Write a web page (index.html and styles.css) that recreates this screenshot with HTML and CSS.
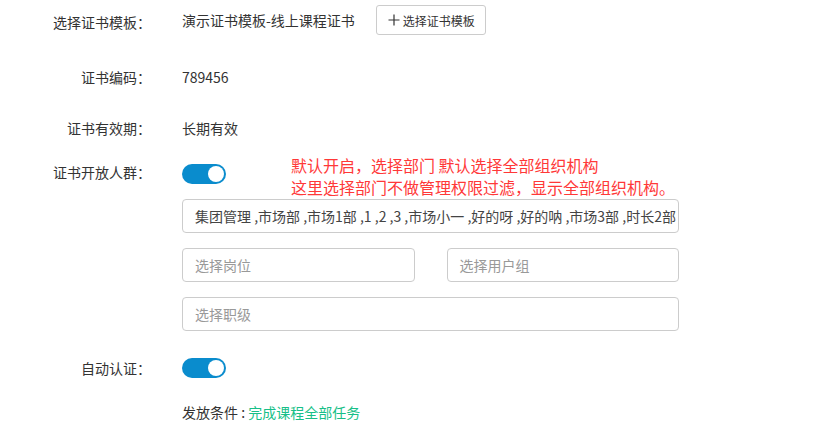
FILE: index.html
```html
<!DOCTYPE html>
<html lang="zh-CN">
<head>
    <meta charset="UTF-8">
    <meta name="viewport" content="width=device-width, initial-scale=1.0">
    <title>证书设置</title>
    <link rel="stylesheet" href="styles.css">
</head>
<body>
    <div class="form">
        <!-- 证书模板 -->
        <div class="row row-template">
            <div class="label">选择证书模板：</div>
            <div class="field inline">
                <span class="value">演示证书模板-线上课程证书</span>
                <button class="btn" type="button">
                    <svg class="plus" width="12" height="12" viewBox="0 0 12 12"><path d="M6 0.5V11.5M0.5 6H11.5" stroke="#333" stroke-width="1.2" fill="none"/></svg>选择证书模板
                </button>
            </div>
        </div>

        <div class="row row-code">
            <div class="label">证书编码：</div>
            <div class="field"><span class="value">789456</span></div>
        </div>

        <div class="row row-period">
            <div class="label">证书有效期：</div>
            <div class="field"><span class="value">长期有效</span></div>
        </div>

        <!-- 开放人群 -->
        <div class="row row-open">
            <div class="label">证书开放人群：</div>
            <div class="field">
                <div class="inline top">
                    <span class="switch on"><span class="knob"></span></span>
                    <p class="note">默认开启，选择部门 默认选择全部组织机构<br>这里选择部门不做管理权限过滤，显示全部组织机构。</p>
                </div>
                <div class="select">集团管理 ,市场部 ,市场1部 ,1 ,2 ,3 ,市场小一 ,好的呀 ,好的呐 ,市场3部 ,时长2部</div>
                <div class="pair">
                    <div class="select placeholder">选择岗位</div>
                    <div class="select placeholder">选择用户组</div>
                </div>
                <div class="select placeholder">选择职级</div>
            </div>
        </div>

        <div class="row row-auto">
            <div class="label">自动认证：</div>
            <div class="field"><span class="switch on"><span class="knob"></span></span></div>
        </div>

        <div class="row row-cond">
            <div class="label"></div>
            <div class="field"><span class="value">发放条件 : <span class="link">完成课程全部任务</span></span></div>
        </div>
    </div>
</body>
</html>
```

FILE: styles.css
```css
body {
    margin: 0;
    font-family: "Noto Sans CJK SC", "Liberation Sans", sans-serif;
    font-size: 14px;
    color: #333;
    background: #fff;
}
.form {
    width: 813px;
}
.row {
    display: flex;
    align-items: flex-start;
}
.label {
    width: 151px;
    flex: none;
    text-align: right;
    color: #333;
    line-height: 20px;
}
.field {
    margin-left: 31px;
    width: 497px;
}
.inline {
    display: flex;
    align-items: center;
}
.inline.top {
    align-items: flex-start;
}
.value {
    line-height: 20px;
}
.row-template {
    padding-top: 12px;
}
.row-template .field {
    margin-top: -7px;
}
.btn {
    display: flex;
    align-items: center;
    height: 30px;
    margin-left: 21px;
    padding: 0 10px 0 11px;
    background: #fff;
    border: 1px solid #ccc;
    border-radius: 3px;
    font-family: inherit;
    font-size: 12px;
    color: #333;
}
.plus {
    margin-right: 3px;
}
.row-code {
    margin-top: 32px;
}
.row-period {
    margin-top: 31px;
}
.row-open {
    margin-top: 24px;
}
.switch {
    position: relative;
    display: inline-block;
    width: 44px;
    height: 20px;
    border-radius: 10px;
    background: #0a8ccd;
    flex: none;
}
.knob {
    position: absolute;
    top: 2px;
    right: 2px;
    width: 16px;
    height: 16px;
    border-radius: 50%;
    background: #fff;
}
.row-open .switch {
    margin-top: 2px;
}
.note {
    margin: -8px 0 0 65px;
    color: #ff3838;
    font-size: 16px;
    line-height: 22px;
}
.select {
    box-sizing: border-box;
    height: 34px;
    margin-top: 15px;
    padding: 0 12px;
    border: 1px solid #ccc;
    border-radius: 4px;
    line-height: 32px;
    white-space: nowrap;
    overflow: hidden;
    color: #444;
}
.row-open .inline + .select {
    margin-top: 1px;
}
.placeholder {
    color: #999;
}
.pair {
    display: flex;
    gap: 32px;
}
.pair .select {
    flex: 1;
}
.row-auto {
    margin-top: 27px;
}
.row-cond {
    margin-top: 20px;
}
.link {
    color: #17bf88;
}
```
